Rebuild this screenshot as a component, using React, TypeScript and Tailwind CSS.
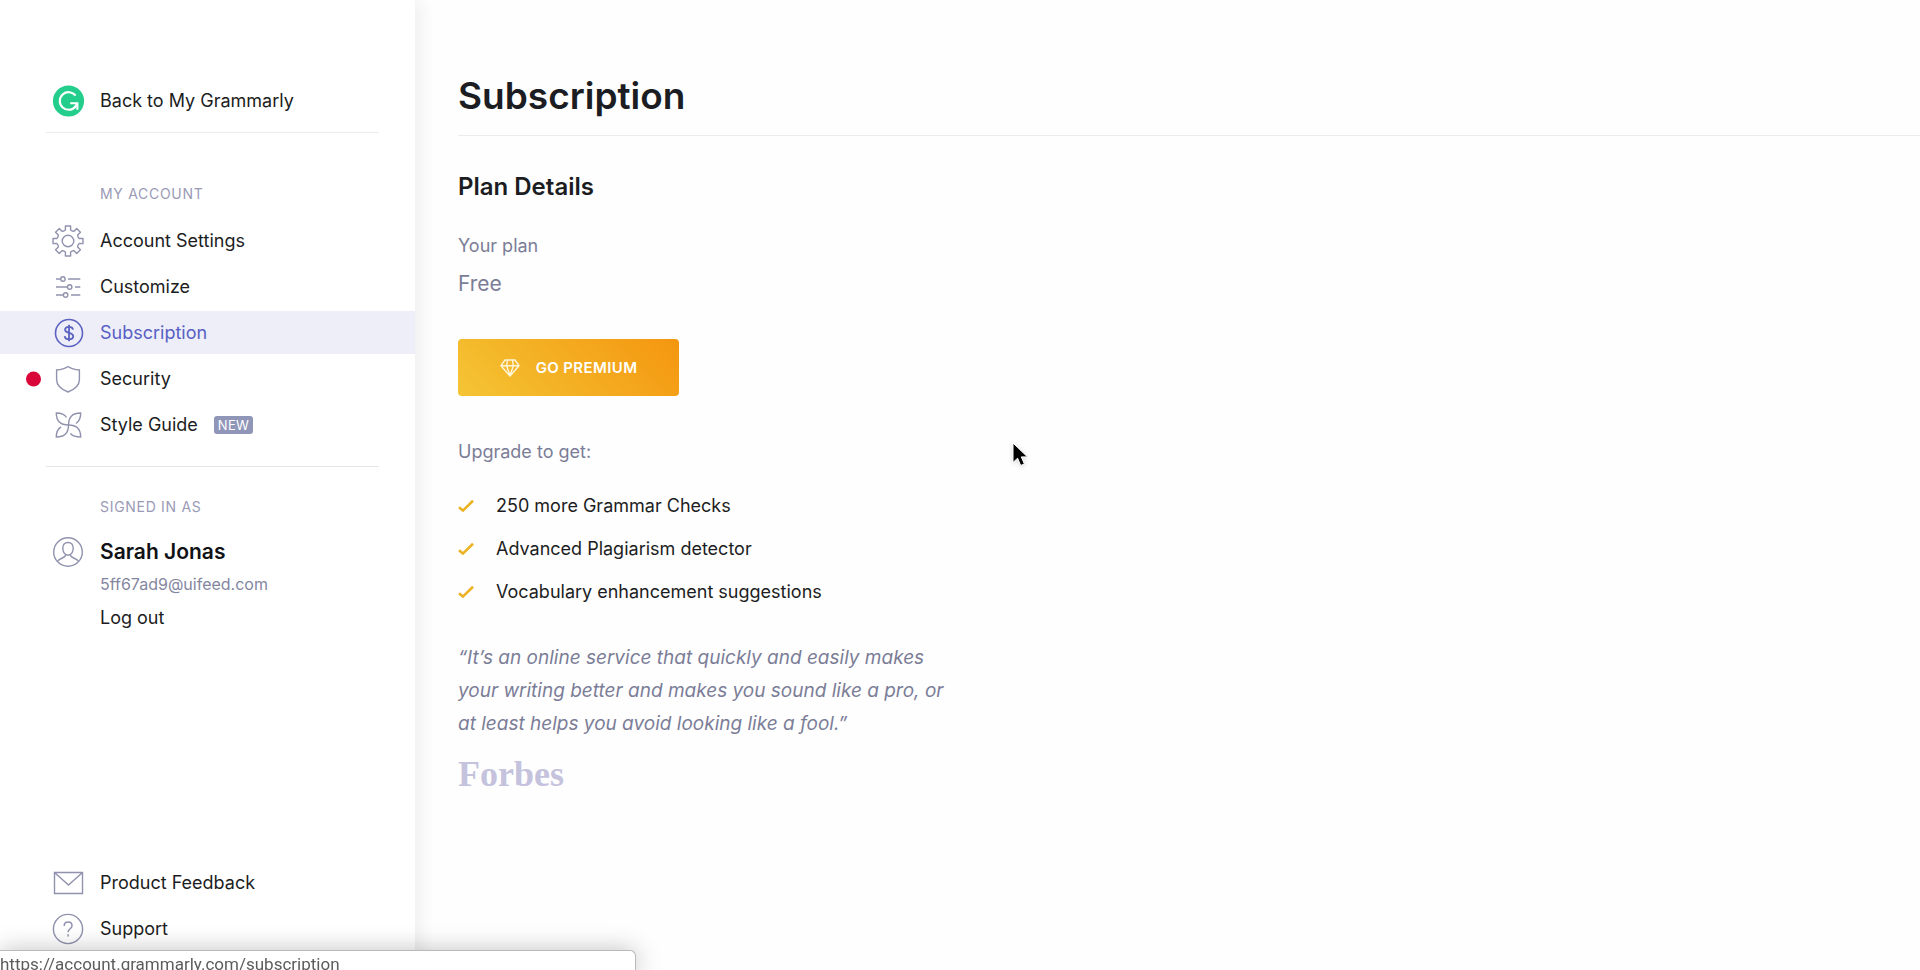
import type { ReactNode } from 'react';

function Icon({ children, className = 'text-[#9193ae]' }: { children: ReactNode; className?: string }) {
  return (
    <svg
      viewBox="0 0 32 32"
      className={`size-8 shrink-0 ${className}`}
      fill="none"
      stroke="currentColor"
      strokeWidth="1.4"
      aria-hidden="true"
    >
      {children}
    </svg>
  );
}

function LogoIcon() {
  return (
    <svg viewBox="0 0 32 32" className="size-8 shrink-0" fill="none" aria-hidden="true">
      <circle cx="16.5" cy="16" r="15.6" fill="#23cd8b" />
      <path d="M23.6 10.6A8.8 8.8 0 1 0 23.3 21.7" stroke="#fff" strokeWidth="2.1" />
      <path d="M18.2 18.2H25.4V24.8" stroke="#fff" strokeWidth="2.1" />
      <path d="M25.4 18.2 22.6 22.6" stroke="#fff" strokeWidth="2.1" />
    </svg>
  );
}

const teeth = [0, 45, 90, 135, 180, 225, 270, 315];

function gearPath() {
  const at = (radius: number, degrees: number) => {
    const a = ((degrees - 90) * Math.PI) / 180;
    return `${(16 + radius * Math.cos(a)).toFixed(2)} ${(16 + radius * Math.sin(a)).toFixed(2)}`;
  };
  return (
    teeth
      .map(
        (t, i) =>
          `${i ? 'L' : 'M'}${at(11.4, t - 13)}L${at(15.2, t - 10)}L${at(15.2, t + 10)}L${at(11.4, t + 13)}L${at(10.8, t + 22.5)}L${at(11.4, t + 32)}`,
      )
      .join('') + 'Z'
  );
}

function GearIcon() {
  return (
    <Icon>
      <path d={gearPath()} strokeLinejoin="round" />
      <circle cx="16" cy="16" r="5.8" />
    </Icon>
  );
}

function SlidersIcon() {
  return (
    <Icon>
      <path d="M4 8h4.500M16 8H28.300M4 16h11.300M23 16H28.300M4 24h7.200M19 24H28.300" />
      <circle cx="10.900" cy="8" r="2.200" />
      <circle cx="17.700" cy="16" r="2.200" />
      <circle cx="13.600" cy="24" r="2.200" />
    </Icon>
  );
}

function DollarIcon() {
  return (
    <Icon className="text-[#5b62c0]">
      <circle cx="17" cy="16" r="13.500" strokeWidth="1.600" />
      <path d="M21 12.600c-.3-1.800-1.800-2.700-4-2.700s-3.900 1-3.900 2.900c0 4.300 8.100 2 8.100 6.400 0 1.900-1.700 3-4.200 3s-4.100-1.100-4.300-3.100M17 7.800v16.400" strokeWidth="1.800" />
    </Icon>
  );
}

function ShieldIcon() {
  return (
    <Icon>
      <path d="M16 3.500c3.500 2.500 7 3.300 11.400 3.500v9.500c0 6-5 10-11.400 12.500-6.400-2.500-11.400-6.500-11.400-12.500V7C9 6.800 12.500 6 16 3.500Z" />
    </Icon>
  );
}

function PinwheelIcon() {
  return (
    <Icon>
      <path d="M14.500 8.500C12.500 5 9 4 4.300 4 4.300 11.500 8 16 16.500 16S28.700 20.500 28.700 28C24 28 20.500 27 18.500 24.500" />
      <path d="M24 14.500C27.500 12 28.700 9 28.700 4 20.500 4 16.500 8 16.500 16S12.500 28 4.300 28C4.300 23 5.500 20 9 17.800" />
    </Icon>
  );
}

function UserIcon() {
  return (
    <Icon>
      <circle cx="16" cy="16" r="14.300" />
      <path d="M16 6.500c3.300 0 5.200 2.300 5.200 5.800 0 3.700-2 6.900-5.200 6.900s-5.200-3.200-5.200-6.900c0-3.500 1.900-5.800 5.200-5.800Z" />
      <path d="M13.700 18.800c0 3.200-5.700 3.200-8 6.200M18.300 18.800c0 3.200 5.700 3.200 8 6.200" />
    </Icon>
  );
}

function MailIcon() {
  return (
    <Icon>
      <path d="M2.500 5.500h28v21h-28ZM2.500 5.500l14 12.500 14-12.500" />
    </Icon>
  );
}

function HelpIcon() {
  return (
    <Icon>
      <circle cx="16" cy="16" r="14.600" />
      <path d="M12.200 13c0-2.300 1.500-3.900 3.900-3.900s3.900 1.400 3.900 3.600c0 3.200-3.900 3-3.900 6.500M16.100 21.300v2.200" strokeWidth="1.500" />
    </Icon>
  );
}

function NavLink({ icon, label, active, alert, badge }: { icon: ReactNode; label: string; active?: boolean; alert?: boolean; badge?: string }) {
  return (
    <a
      href="#"
      aria-current={active ? 'page' : undefined}
      className={`relative flex h-[43px] items-center gap-4 pl-[52px] ${active ? 'bg-[#edeef8] text-[#5860c4]' : ''}`}
    >
      {alert && <span className="absolute left-[26px] top-1/2 size-[15px] -translate-y-1/2 rounded-full bg-[#d9063a]" />}
      {icon}
      <span>{label}</span>
      {badge && <span className="rounded-[3px] bg-[#9096b8] px-1 text-[13px] leading-[18px] tracking-wide text-white">{badge}</span>}
    </a>
  );
}

function Check() {
  return (
    <svg viewBox="0 0 16 14" className="h-[14px] w-4 shrink-0" fill="none" aria-hidden="true">
      <path d="M1 8.300 4.900 11.600 15 1.800" stroke="#ebb322" strokeWidth="2.600" />
    </svg>
  );
}

const perks = ['250 more Grammar Checks', 'Advanced Plagiarism detector', 'Vocabulary enhancement suggestions'];

export default function App() {
  return (
    <div className="flex min-h-screen bg-[#fefefe] font-['Inter',sans-serif] text-lg leading-6 text-[#1c1d22]">
      <aside className="flex w-[415px] shrink-0 flex-col bg-white pb-5 pt-[76px] shadow-[8px_0_14px_rgba(0,0,0,0.05)]">
        <a href="#" className="flex h-[50px] items-center gap-4 pl-[52px]">
          <LogoIcon />
          <span>Back to My Grammarly</span>
        </a>
        <hr className="ml-[46px] mr-9 mt-[6px] border-[#ececef]" />

        <h2 className="mt-[49px] pl-[100px] text-sm leading-6 tracking-wider text-[#9a9ab6]">MY ACCOUNT</h2>
        <nav className="mt-[13px] flex flex-col gap-[3px]">
          <NavLink icon={<GearIcon />} label="Account Settings" />
          <NavLink icon={<SlidersIcon />} label="Customize" />
          <NavLink icon={<DollarIcon />} label="Subscription" active />
          <NavLink icon={<ShieldIcon />} label="Security" alert />
          <NavLink icon={<PinwheelIcon />} label="Style Guide" badge="NEW" />
        </nav>
        <hr className="ml-[46px] mr-9 mt-5 border-[#e6e6ea]" />

        <h2 className="mt-7 pl-[100px] text-sm leading-6 tracking-wider text-[#9a9ab6]">SIGNED IN AS</h2>
        <div className="mt-[17px] flex items-center gap-4 pl-[52px]">
          <UserIcon />
          <strong className="text-[21px] font-semibold text-[#111216]">Sarah Jonas</strong>
        </div>
        <p className="mt-1 pl-[100px] text-base leading-6 text-[#8486a0]">5ff67ad9@uifeed.com</p>
        <a href="#" className="mt-[10px] pl-[100px]">Log out</a>

        <div className="mt-auto flex flex-col gap-[3px]">
          <NavLink icon={<MailIcon />} label="Product Feedback" />
          <NavLink icon={<HelpIcon />} label="Support" />
        </div>
      </aside>

      <main className="min-w-0 flex-1 pl-[43px] pt-[72px]">
        <h1 className="border-b border-[#ececef] pb-[15px] text-[37px] font-semibold leading-[48px]">Subscription</h1>
        <h2 className="mt-[35px] text-2xl font-semibold leading-8">Plan Details</h2>
        <p className="mt-[31px] text-[#7b7d97]">Your plan</p>
        <p className="mt-[14px] text-[21px] leading-6 text-[#7b7d97]">Free</p>

        <button
          type="button"
          className="mt-[43px] flex h-[57px] w-[221px] items-center justify-center gap-4 rounded bg-linear-[45deg,#f4c535,#f4960f] text-[15px] font-semibold tracking-wide text-white"
        >
          <svg viewBox="0 0 20 18" className="h-[18px] w-5" fill="none" stroke="#fff6da" strokeWidth="1.400" strokeLinejoin="round" aria-hidden="true">
            <path d="M5 1h10l4 5.700-9 10.300L1 6.700ZM1 6.700h18M7.500 1.200 6.600 6.700 10 16.500l3.400-9.800-.9-5.500" />
          </svg>
          GO PREMIUM
        </button>

        <p className="mt-11 text-[#7b7d97]">Upgrade to get:</p>
        <ul className="mt-5 flex flex-col">
          {perks.map((perk) => (
            <li key={perk} className="flex h-[43px] items-center gap-[22px]">
              <Check />
              {perk}
            </li>
          ))}
        </ul>

        <blockquote className="mt-7 text-[19px] italic leading-[33px] text-[#7b7d97]">
          “It’s an online service that quickly and easily makes
          <br />
          your writing better and makes you sound like a pro, or
          <br />
          at least helps you avoid looking like a fool.”
        </blockquote>
        <p className="mt-[14px] font-['Liberation_Serif',serif] text-[36px] font-bold leading-10 text-[#c4c2dc]">Forbes</p>
      </main>

      <div className="fixed -bottom-1 left-0 h-6 w-[636px] rounded-tr-md border-r border-t border-[#b9b9b9] bg-white font-['Roboto',sans-serif] text-[17px] leading-[26px] text-[#5c5c5c] shadow-[0_0_24px_rgba(0,0,0,0.25)]">
        https://account.grammarly.com/subscription
      </div>

      <svg viewBox="0 0 18 26" className="fixed left-[1012px] top-[442px] h-[26px] w-[18px] drop-shadow-sm" aria-hidden="true">
        <path d="M1 1v19.500l4.600-4.300 3.100 7.300 3.700-1.600-3.100-7h6.200Z" fill="#000" stroke="#fff" strokeWidth="1" />
      </svg>
    </div>
  );
}
